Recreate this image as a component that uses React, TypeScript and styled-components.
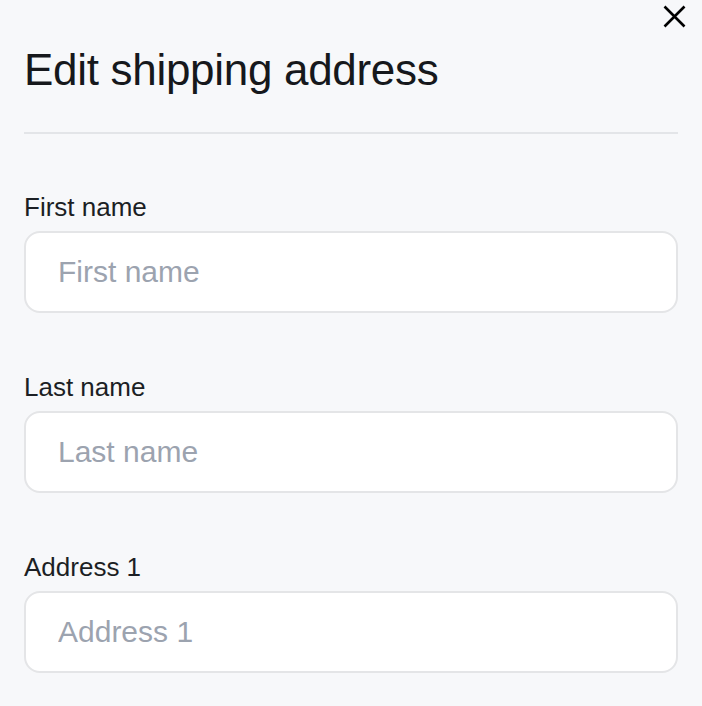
import styled, { createGlobalStyle } from "styled-components";

const GlobalStyle = createGlobalStyle`
    html, body {
        margin: 0;
        padding: 0;
        background-color: #f7f8fa;
    }
    * {
        box-sizing: border-box;
    }
`;

const Panel = styled.div`
    position: relative;
    width: 702px;
    min-height: 706px;
    padding: 43px 24px 0 24px;
    background-color: #f7f8fa;
    font-family: "Liberation Sans", Arial, sans-serif;
    color: #1c1f24;
`;

const CloseButton = styled.button`
    position: absolute;
    top: 5px;
    right: 16px;
    width: 23px;
    height: 23px;
    padding: 0;
    border: 0;
    background: none;
    cursor: pointer;
    display: flex;
    align-items: center;
    justify-content: center;
`;

const Title = styled.h1`
    margin: 0;
    font-size: 44px;
    line-height: 53px;
    font-weight: 400;
    letter-spacing: -0.3px;
    color: #16181c;
`;

const Divider = styled.hr`
    margin: 36px 0 58px 0;
    border: 0;
    height: 2px;
    background-color: #e3e5e8;
`;

const Form = styled.form`
    display: flex;
    flex-direction: column;
    gap: 59px;
`;

const Field = styled.div`
    display: flex;
    flex-direction: column;
    gap: 9px;
`;

const Label = styled.label`
    font-size: 26px;
    line-height: 30px;
    color: #1c1f24;
`;

const Input = styled.input`
    height: 82px;
    width: 100%;
    padding: 0 32px;
    border: 2px solid #e4e5e7;
    border-radius: 16px;
    background-color: #ffffff;
    font-family: "Liberation Sans", Arial, sans-serif;
    font-size: 30px;
    color: #1c1f24;
    outline: none;

    &::placeholder {
        color: #9ca3af;
    }
`;

const fields = [
    { id: "first-name", label: "First name" },
    { id: "last-name", label: "Last name" },
    { id: "address-1", label: "Address 1" },
];

export default function App() {
    return (
        <>
            <GlobalStyle />
            <Panel>
                <CloseButton aria-label="Close">
                    <svg width="23" height="23" viewBox="0 0 23 23">
                        <path d="M1.5 1.5 L21.5 21.5 M21.5 1.5 L1.5 21.5" stroke="#000" strokeWidth="2.6" />
                    </svg>
                </CloseButton>
                <Title>Edit shipping address</Title>
                <Divider />
                <Form>
                    {fields.map((f) => (
                        <Field key={f.id}>
                            <Label htmlFor={f.id}>{f.label}</Label>
                            <Input id={f.id} placeholder={f.label} />
                        </Field>
                    ))}
                </Form>
            </Panel>
        </>
    );
}
